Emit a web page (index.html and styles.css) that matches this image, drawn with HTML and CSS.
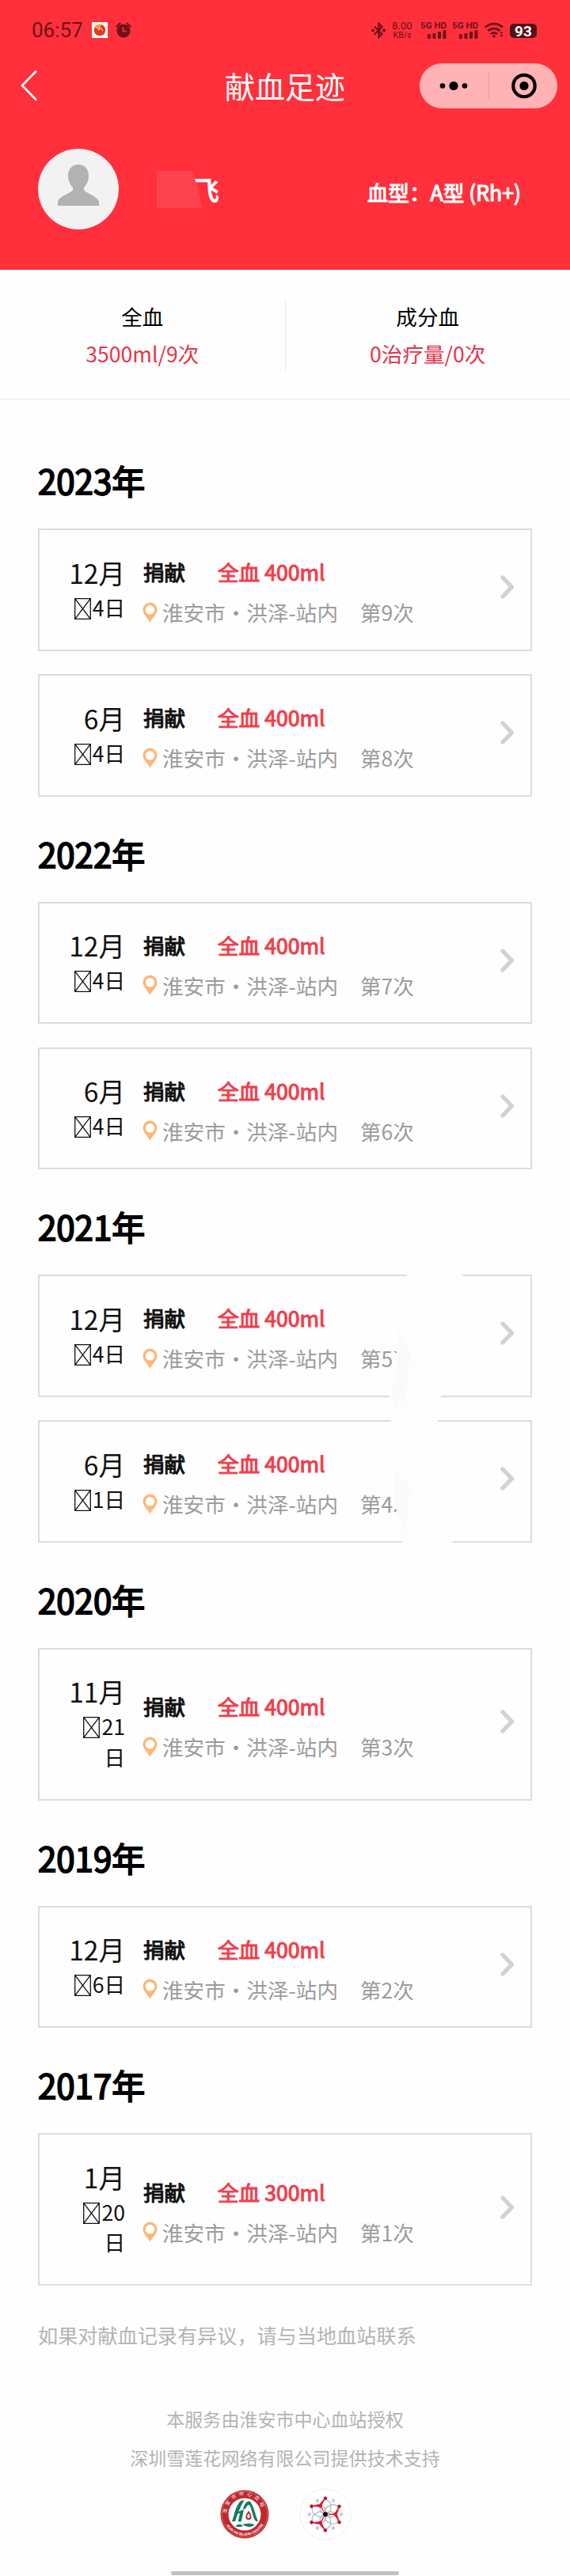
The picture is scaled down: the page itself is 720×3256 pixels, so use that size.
FILE: index.html
```html
<!DOCTYPE html>
<html lang="zh-CN">
  <head>
    <meta charset="utf-8">
    <meta name="viewport" content="width=device-width, initial-scale=1">
    <title>献血足迹</title>
    <link rel="stylesheet" href="styles.css">
  </head>
  <body>
<div class="page">
  <div class="header">
    <div class="status">
      <span class="clock">06:57</span>
      <svg class="appIcon" width="20" height="20" viewBox="0 0 20 20"><rect width="20" height="20" fill="#fff"/><circle cx="10" cy="10" r="7.3" fill="#e8391c"/><path d="M3.500 7a7 7 0 0 1 9-4c-1 3-5 4-9 4z" fill="#f9a21b"/><path d="M6 6l3 4 1-4 4 5" fill="none" stroke="#fff" stroke-width="1"/></svg>
      <svg width="20" height="20" viewBox="0 0 20 20" fill="#6d1219"><circle cx="10" cy="11" r="8.6"/><path d="M0 5.500L5 .5l2 1L1.500 7zM20 5.500L15 .5l-2 1L18.500 7z"/><path d="M9.500 6v5.500H14" fill="none" stroke="#ff303b" stroke-width="1.600"/></svg>
      <div class="statusRight">
        <svg class="bt" width="18" height="21" viewBox="0 0 18 21"><path d="M4 5.500l9.500 9.500L9.500 19V2l4 4L4 15.500" fill="none" stroke="#6d1219" stroke-width="2.300"/><circle cx="2" cy="10.500" r="1.900" fill="#6d1219"/><circle cx="16" cy="10.500" r="1.900" fill="#6d1219"/></svg>
        <div class="speed"><span>8.00</span><span class="unit">KB/s</span></div>
        <div class="signal">
          <span>5G HD</span>
          <svg width="24" height="11" viewBox="0 0 24 11" fill="#6d1219"><rect x="0" y="5" width="4" height="6" rx="1"/><rect x="6.500" y="4" width="4" height="7" rx="1"/><rect x="13" y="2" width="4" height="9" rx="1"/><rect x="19.500" y="0" width="4" height="11" rx="1"/></svg>
        </div>
        <div class="signal">
          <span>5G HD</span>
          <svg width="24" height="11" viewBox="0 0 24 11" fill="#6d1219"><rect x="0" y="5" width="4" height="6" rx="1"/><rect x="6.500" y="4" width="4" height="7" rx="1"/><rect x="13" y="2" width="4" height="9" rx="1"/><rect x="19.500" y="0" width="4" height="11" rx="1"/></svg>
        </div>
        <svg class="wifi" width="25" height="20" viewBox="0 0 25 20"><g fill="none" stroke="#6d1219" stroke-width="2.800"><path d="M1 6.500a16 16 0 0 1 22 0"/><path d="M4.500 11a11 11 0 0 1 15 0"/><path d="M8 15a6 6 0 0 1 8 0"/></g><circle cx="12" cy="17.800" r="1.900" fill="#6d1219"/><path d="M19.500 14.500l2-3 2 3zM19.500 16l2 3 2-3z" fill="#6d1219"/></svg>
        <div class="battery">93</div>
      </div>
    </div>
    <div class="nav">
      <svg class="back" width="22" height="40" viewBox="0 0 22 40"><path d="M20 1.500L2 20l18 18.500" fill="none" stroke="#fff" stroke-width="2.600"/></svg>
      <span class="title">献血足迹</span>
      <div class="capsule">
        <svg width="174" height="57" viewBox="0 0 174 57"><circle cx="29" cy="28.500" r="3.300"/><circle cx="43" cy="28.500" r="5.600"/><circle cx="57" cy="28.500" r="3.300"/><path d="M87 11v34" stroke="#eb9da0" stroke-width="1"/><circle cx="132" cy="28.500" r="13.700" fill="none" stroke="#000" stroke-width="4.200"/><circle cx="132" cy="28.500" r="5.600"/></svg>
      </div>
    </div>
    <div class="user">
      <div class="avatar">
        <svg width="102" height="102" viewBox="0 0 102 102"><path d="M51 20c8 0 13 6 13 14 0 7-3 12-6 15v3c1 4 19 8 19 16v4H25v-4c0-8 18-12 19-16v-3c-3-3-6-8-6-15 0-8 5-14 13-14z" fill="#b2b2b2"/></svg>
      </div>
      <div class="name">飞<span class="mask"></span></div>
      <div class="bloodType">血型：A型 (Rh+)</div>
    </div>
  </div>

  <div class="stats">
    <div class="stat">
      <div>全血</div>
      <div class="statValue">3500ml/9次</div>
    </div>
    <div class="stat">
      <div>成分血</div>
      <div class="statValue">0治疗量/0次</div>
    </div>
  </div>

  <div class="content" id="content"></div>

  <div class="note">如果对献血记录有异议，请与当地血站联系</div>
  <div class="footer">
    <div>本服务由淮安市中心血站授权</div>
    <div>深圳雪莲花网络有限公司提供技术支持</div>
    <div class="logos">
      <svg width="66" height="66" viewBox="0 0 66 66">
        <defs>
          <path id="arcTop" d="M10.500 35a22.700 22.700 0 1 1 45 0"/>
          <path id="arcBottom" d="M6 36a27.200 27.200 0 0 0 54 0"/>
        </defs>
        <circle cx="33" cy="33" r="30.500" fill="#c1272d"/>
        <circle cx="33" cy="33" r="28.800" fill="none" stroke="#e9a5a5" stroke-width=".5"/>
        <circle cx="33" cy="33" r="20.500" fill="#fff"/>
        <text class="sealText"><textPath href="#arcTop" startOffset="3">淮安市中心血站</textPath></text>
        <text class="sealLatin"><textPath href="#arcBottom" startOffset="12">HUAI AN BLOOD CENTRE</textPath></text>
        <path d="M17 42c3-8 4-16 8-22 2-4 6-6 7-4-5 8-8 17-11 26z" fill="#137a5d"/>
        <path d="M21 31c5-1 7-3 11-4l-3 14c-1 2-4 2-4 0l2-9z" fill="#137a5d"/>
        <path d="M31 26c2-6 5-11 9-9 5 6 6 16 10 25-5 1-6-7-8-13-1-4-2-8-4-8-3 1-4 8-7 5z" fill="#137a5d"/>
        <path d="M38 30c4 5 3 9 0 9s-4-4 0-9z" fill="#fff" stroke="#c1272d" stroke-width="2"/>
        <path d="M21 48q6-5 10 0-5 2-10 0M30 46q8-3 16 0-6 6-16 0" fill="#137a5d"/>
      </svg>
      <svg width="66" height="66" viewBox="-33 -33 66 66">
        <circle r="32" fill="#fff" stroke="#efefef"/>
        <g id="flower"></g>
        <circle r="3" fill="#111"/>
      </svg>
    </div>
  </div>
  <div class="homeBar"></div>

  <svg class="smear" width="120" height="480" viewBox="0 0 120 480"><path d="M58 0h50l10 30-6 40-10 10-4 60-10 50-13 44-4 30v60l10 60 8 34 13 20v42H35l-6-42-4-20-8-50-3-60-4-74 4-30 6-30 2-40 10-54 8-30 10-40z" fill="#fdfdfd"/><path d="M22 150l14 30-6 60-14 10-2-20 7-40zM16 330l20 20-6 60-14-40z" fill="#fafafa"/></svg>
</div>
<script>
  // donation records by year: month, day, number, volume
  var records = [
    ['2023', [[12, '4', 9, 400], [6, '4', 8, 400]]],
    ['2022', [[12, '4', 7, 400], [6, '4', 6, 400]]],
    ['2021', [[12, '4', 5, 400], [6, '1', 4, 400]]],
    ['2020', [[11, '21', 3, 400]]],
    ['2019', [[12, '6', 2, 400]]],
    ['2017', [[1, '20', 1, 300]]]
  ];
  var box = '<svg class="box" width="21" height="27" viewBox="0 0 21 27"><path d="M.7.7h19.600v25.600H.7zL20.300 26.300M20.300.7L.7 26.300" fill="none" stroke="#111" stroke-width="1.300"/></svg>';
  var pin = '<svg class="pin" width="19" height="26" viewBox="0 0 19 26"><path fill-rule="evenodd" d="M9.500.5a9 9 0 0 1 9 9c0 6-5 9-9 16-4-7-9-10-9-16a9 9 0 0 1 9-9zm0 3.500a5.800 5.800 0 1 0 0 11.600A5.800 5.800 0 0 0 9.500 4z" fill="#ffb676"/></svg>';
  var arrow = '<svg class="arrow" width="18" height="30" viewBox="0 0 18 30"><path d="M3 3l11.500 12L3 27" fill="none" stroke="#d2d2d2" stroke-width="5.400" stroke-linecap="round" stroke-linejoin="round"/></svg>';
  var html = '';
  records.forEach(function(year) {
    html += '<h2 class="year">' + year[0] + '年</h2><div class="cards">';
    year[1].forEach(function(r) {
      html += '<div class="card"><div class="date"><div class="month">' + r[0] + '月</div>' +
        '<div class="day">' + box + r[1] + (r[1].length > 1 ? '<br>' : '') + '日</div></div>' +
        '<div class="detail"><div class="kind"><span class="label">捐献</span><span class="volume">全血 ' + r[3] + 'ml</span></div>' +
        '<div class="place">' + pin + '<span class="station">淮安市・洪泽-站内</span><span>第' + r[2] + '次</span></div></div>' +
        arrow + '</div>';
    });
    html += '</div>';
  });
  document.getElementById('content').innerHTML = html;

  // snow lotus logo, six petals
  var petals = '';
  for (var i = 0; i < 6; i++) {
    petals += '<g transform="rotate(' + (i * 60) + ')"><path d="M0 0Q6 6 11 1.500T17 9M0 0Q6-6 11-1.500T17-9" fill="none" stroke="#aebac4" stroke-width="1.300"/>' +
      '<circle cx="20" cy="0" r="2.300" fill="#c3ced6"/></g>';
  }
  for (i = 0; i < 3; i++) {
    petals += '<g transform="rotate(' + (i * 120) + ')"><path d="M4 0H10Q14 2 17.500 10Q14 1 14 0Q14-1 17.500-10Q14-2 10 0z" fill="#e0142c" stroke="#e0142c" stroke-width="1.300"/>' +
      '<circle cx="17.500" cy="10" r="2.300" fill="#c8132d"/><circle cx="17.500" cy="-10" r="2.300" fill="#c8132d"/></g>';
  }
  document.getElementById('flower').innerHTML = petals;
</script>
  </body>
</html>
```
FILE: styles.css
```css
* {
  box-sizing: border-box;
  margin: 0px;
  padding: 0px;
}
body {
  background-color: #fefefe;
  font-family: 'Noto Sans CJK SC', sans-serif;
  font-size: 26.6px;
  color: #000;
}
svg {
  display: block;
  flex: none;
}
.page {
  position: relative;
  width: 720px;
  height: 3256px;
  overflow: hidden;
  display: flex;
  flex-direction: column;
}
.header {
  height: 341px;
  flex: none;
  background-color: #ff303b;
  color: white;
}
.status {
  height: 76px;
  padding: 0px 40px 0px 40px;
  display: flex;
  align-items: center;
  color: #6d1219;
  font-family: Roboto, sans-serif;
}
.clock {
  font-size: 26px;
  width: 76px;
}
.appIcon {
  margin-right: 10px;
}
.statusRight {
  margin-left: auto;
  display: flex;
  align-items: center;
}
.speed {
  width: 28px;
  margin-left: 7px;
  display: flex;
  flex-direction: column;
  align-items: center;
  font-size: 13px;
  line-height: 12px;
}
.unit {
  font-size: 10.5px;
  line-height: 11px;
}
.signal {
  width: 33px;
  margin-left: 7px;
  display: flex;
  flex-direction: column;
  align-items: flex-end;
  font-size: 11.5px;
  font-weight: bold;
  line-height: 11px;
  white-space: nowrap;
}
.speed + .signal {
  margin-left: 9px;
}
.wifi {
  margin-left: 8px;
}
.battery {
  width: 34px;
  height: 18px;
  margin: 2px 2px 0px 7px;
  border-radius: 5px;
  background-color: #551018;
  color: white;
  font-size: 19px;
  font-weight: bold;
  line-height: 19px;
  text-align: center;
}
.nav {
  height: 64px;
  padding: 0px 16px 0px 16px;
  display: grid;
  grid-template-columns: 1fr auto 1fr;
  align-items: center;
}
.back {
  margin-left: 10px;
}
.title {
  font-size: 38px;
  line-height: 60px;
}
.capsule {
  justify-self: end;
  width: 174px;
  height: 57px;
  border-radius: 29px;
  background-color: #ffb3b4;
}
.user {
  display: flex;
  align-items: center;
  margin-top: 48px;
  padding: 0px 62px 0px 48px;
}
.avatar {
  width: 102px;
  height: 102px;
  border-radius: 50%;
  background-color: #f2f2f2;
}
.name {
  position: relative;
  margin-left: 94px;
  font-size: 33px;
  font-weight: bold;
}
/* hides the first part of the name */
.mask {
  position: absolute;
  left: -46px;
  top: 1px;
  width: 58px;
  height: 47px;
  background-color: #fd434e;
  clip-path: polygon(0 0, 77% 0, 88% 40%, 100% 100%, 0 100%);
}
.bloodType {
  margin-left: auto;
  padding-top: 7px;
  -webkit-text-stroke: 1.1px;
}
.stats {
  flex: none;
  height: 164px;
  padding-top: 38px;
  display: flex;
  border-bottom: 1px solid #e4e4e4;
}
.stat {
  flex: 1;
  height: 90px;
  display: flex;
  flex-direction: column;
  align-items: center;
  line-height: 41px;
}
.stat + .stat {
  border-left: 1px solid #e8e8e8;
}
.statValue {
  margin-top: 6px;
  color: #e5344a;
}
.content {
  padding: 30px 48px 0px 48px;
}
.year {
  height: 133px;
  padding-top: 42px;
  font-size: 42px;
  font-weight: normal;
  line-height: 60px;
  -webkit-text-stroke: 1.9px;
}
.cards {
  display: flex;
  flex-direction: column;
  gap: 29.5px;
}
.card {
  min-height: 154.5px;
  padding-right: 20px;
  border: 2px solid #dcdcdc;
  display: flex;
  align-items: center;
}
.date {
  width: 108px;
  padding: 27.5px 0px 33.5px 0px;
  text-align: right;
  color: #111;
}
.month {
  font-size: 33.6px;
  line-height: 51px;
}
.day {
  line-height: 38.5px;
  white-space: nowrap;
}
.box {
  display: inline-block;
  vertical-align: -4px;
  margin-right: 2px;
}
.detail {
  margin-left: 23px;
  padding-top: 6px;
}
.kind {
  line-height: 51px;
  -webkit-text-stroke: 1.1px;
}
.label {
  display: inline-block;
  width: 94px;
  color: #111;
}
.volume {
  color: #ee404d;
}
.place {
  display: flex;
  align-items: center;
  line-height: 51px;
  color: #9c9c9c;
}
.pin {
  margin: 0px 6px 0px -1px;
}
.station {
  width: 250px;
}
.arrow {
  margin-left: auto;
  margin-bottom: 6px;
}
.note {
  margin: 42px 48px 0px 48px;
  font-size: 25.15px;
  line-height: 40px;
  color: #b4b4b4;
}
.footer {
  margin-top: 62px;
  font-size: 23.04px;
  line-height: 49px;
  color: #b4b4b4;
  text-align: center;
}
.logos {
  display: flex;
  justify-content: center;
  gap: 36px;
  margin-top: 14px;
}
.sealText {
  font-size: 6px;
  letter-spacing: 3.5px;
  fill: #fff;
}
.sealLatin {
  font-family: 'Liberation Sans', sans-serif;
  font-size: 4.5px;
  font-weight: bold;
  fill: #fff;
}
.homeBar {
  position: absolute;
  left: 216px;
  bottom: 1px;
  width: 288px;
  height: 5px;
  border-radius: 3px;
  background-color: #c2c2c2;
}
/* pale brush stroke over the 2021 cards */
.smear {
  position: absolute;
  left: 482px;
  top: 1530px;
}
```
